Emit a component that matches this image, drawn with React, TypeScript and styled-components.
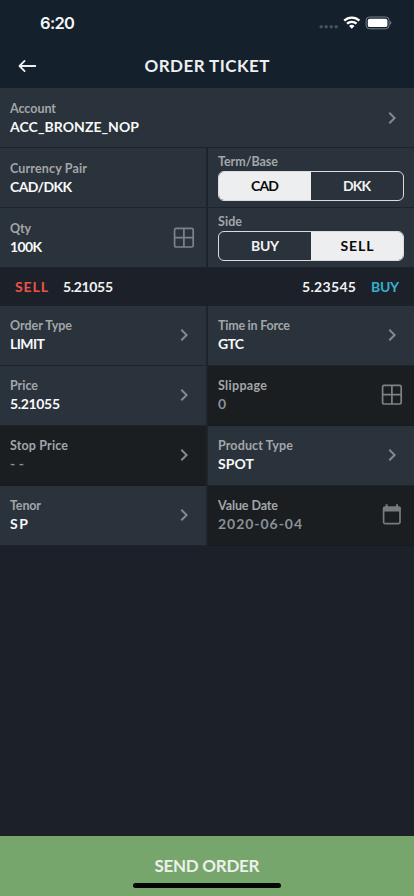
import React, { useLayoutEffect, useRef, useState } from "react";
import styled, { createGlobalStyle } from "styled-components";

const GlobalStyle = createGlobalStyle`
  * { box-sizing: border-box; }
  body { margin: 0; background: #1c2028; }
`;

const Screen = styled.div`
  width: 414px;
  height: 896px;
  display: flex;
  flex-direction: column;
  overflow: hidden;
  background: #1c2028;
  color: #f1f2f3;
  font-family: Lato, "Open Sans", sans-serif;
`;

const StatusBar = styled.div`
  height: 44px;
  flex: none;
  display: flex;
  align-items: center;
  justify-content: space-between;
  padding: 2px 22px 0 40px;
  background: #14202c;
`;

const Clock = styled.div`
  font: 600 16.5px/22px Inter, sans-serif;
  color: #f4f5f6;
`;

const StatusIcons = styled.div`
  display: flex;
  align-items: center;
  svg { display: block; }
`;

const Header = styled.header`
  height: 44px;
  flex: none;
  display: grid;
  grid-template-columns: 54px 1fr 54px;
  align-items: center;
  background: #14202c;
`;

const BackButton = styled.button`
  border: 0;
  background: none;
  padding: 0 0 1px 18px;
  height: 44px;
  svg { display: block; }
`;

const Title = styled.h1`
  margin: 0;
  display: flex;
  justify-content: center;
  font-size: 17px;
  line-height: 44px;
  font-weight: 700;
  color: #eeeff0;
`;

const Row = styled.div<{ $single?: boolean }>`
  display: grid;
  grid-template-columns: ${(p) => (p.$single ? "1fr" : "206px 206px")};
  column-gap: 2px;
  height: 60px;
  flex: none;
  background: #1e242b;
`;

const Cell = styled.div<{ $disabled?: boolean }>`
  display: flex;
  align-items: center;
  justify-content: space-between;
  padding: 0 10px;
  background: ${(p) => (p.$disabled ? "#1a1e21" : "#2a323b")};
  border-bottom: 1px solid ${(p) => (p.$disabled ? "#161a1e" : "#1e242b")};
`;

const Details = styled.section`
  flex: none;
  ${Cell} { padding-bottom: 2px; }
`;

const Labels = styled.div`
  display: flex;
  flex-direction: column;
`;

const Label = styled.div`
  font-size: 12.5px;
  line-height: 18px;
  font-weight: 700;
  color: #a3a6a9;
`;

const Value = styled.div<{ $muted?: boolean }>`
  font-size: 14px;
  line-height: 18px;
  font-weight: 700;
  color: ${(p) => (p.$muted ? "#8b9099" : "#f8f9f9")};
`;

const IconSlot = styled.div`
  width: 24px;
  svg { display: block; }
`;

const ToggleCell = styled(Cell)`
  flex-direction: column;
  align-items: flex-start;
  justify-content: flex-start;
  padding-top: 5px;
`;

const Toggle = styled.div`
  width: 186px;
  height: 30px;
  display: grid;
  grid-template-columns: 1fr 1fr;
  border: 1px solid #d9dbdd;
  border-radius: 6px;
  overflow: hidden;
`;

const Option = styled.button<{ $on: boolean }>`
  border: 0;
  padding: 0;
  display: flex;
  align-items: center;
  justify-content: center;
  font: 700 14px/18px Lato, sans-serif;
  background: ${(p) => (p.$on ? "#edeef0" : "transparent")};
  color: ${(p) => (p.$on ? "#08090a" : "#f1f2f3")};
`;

const RateBar = styled.div`
  height: 39px;
  margin-bottom: -1px;
  flex: none;
  display: flex;
  align-items: center;
  justify-content: space-between;
  padding: 0 15px 1px;
  background: #1c2028;
  font-size: 14px;
  line-height: 18px;
  font-weight: 700;
`;

const Quote = styled.div`
  display: flex;
  gap: 15px;
`;

const Side = styled.span<{ $color: string }>`
  color: ${(p) => p.$color};
`;

const Spacer = styled.div`
  flex: 1;
`;

const Send = styled.button`
  height: 60px;
  flex: none;
  border: 0;
  padding: 19px 0 5px;
  display: flex;
  flex-direction: column;
  align-items: center;
  justify-content: space-between;
  background: #77a66c;
  color: #edf0ec;
  font: 700 17px/22px Lato, sans-serif;
`;

const HomeIndicator = styled.div`
  width: 148px;
  height: 5px;
  flex: none;
  margin-bottom: 3px;
  border-radius: 3px;
  background: #050605;
`;

const Tracked = styled.span`
  display: inline-block;
  white-space: pre;
`;

/** Tracks the text out or in so that it spans the given width. */
function Fit({ w, children }: { w: number; children: string }) {
  const ref = useRef<HTMLSpanElement>(null);
  const [spacing, setSpacing] = useState(0);
  useLayoutEffect(() => {
    const natural = ref.current!.getBoundingClientRect().width;
    setSpacing((w - natural) / Math.max(1, children.length - 1));
  }, []);
  return (
    <Tracked ref={ref} style={{ letterSpacing: spacing, marginRight: -spacing }}>
      {children}
    </Tracked>
  );
}

type IconName = "chevron" | "grid" | "calendar";

function Icon({ name }: { name: IconName }) {
  if (name === "chevron")
    return (
      <svg width="24" height="24" viewBox="0 0 24 24" fill="#858a8f">
        <path d="M8.59 16.59 13.17 12 8.59 7.41 10 6l6 6-6 6z" />
      </svg>
    );
  if (name === "grid")
    return (
      <svg width="24" height="24" viewBox="0 0 24 24" fill="none" stroke="#7e8287" strokeWidth="1.7">
        <rect x="2.6" y="2.4" width="18.6" height="18.6" rx="1.5" />
        <path d="M11.9 2.5v18.5M2.6 11.7h18.6" />
      </svg>
    );
  return (
    <svg width="24" height="24" viewBox="0 0 24 24">
      <rect x="3.6" y="4.1" width="16.4" height="16.5" rx="1.3" fill="none" stroke="#777b7d" strokeWidth="1.7" />
      <path d="M3 4h17.6v4.4H3zM5.6 1.3h2v3h-2zM16 1.3h2v3h-2z" fill="#777b7d" />
    </svg>
  );
}

interface FieldProps {
  label: string;
  lw: number;
  value: string;
  vw: number;
  icon?: IconName;
  disabled?: boolean;
}

function Field({ label, lw, value, vw, icon, disabled }: FieldProps) {
  return (
    <Cell $disabled={disabled}>
      <Labels>
        <Label><Fit w={lw}>{label}</Fit></Label>
        <Value $muted={disabled}><Fit w={vw}>{value}</Fit></Value>
      </Labels>
      {icon && <IconSlot><Icon name={icon} /></IconSlot>}
    </Cell>
  );
}

interface ToggleProps {
  label: string;
  lw: number;
  options: [string, number][];
  selected: number;
}

function ToggleField({ label, lw, options, selected }: ToggleProps) {
  return (
    <ToggleCell>
      <Label><Fit w={lw}>{label}</Fit></Label>
      <Toggle>
        {options.map(([text, w], i) => (
          <Option key={text} $on={i === selected}><Fit w={w}>{text}</Fit></Option>
        ))}
      </Toggle>
    </ToggleCell>
  );
}

export default function App() {
  return (
    <Screen>
      <GlobalStyle />
      <StatusBar>
        <Clock><Fit w={35}>6:20</Fit></Clock>
        <StatusIcons>
          <svg width="74" height="16" viewBox="0 0 74 16">
            <g fill="#46515b">
              <circle cx="3.2" cy="11.8" r="1.8" />
              <circle cx="8.2" cy="11.8" r="1.8" />
              <circle cx="13.2" cy="11.8" r="1.8" />
              <circle cx="18.2" cy="11.8" r="1.8" />
            </g>
            <g fill="none" stroke="#fff" strokeWidth="2.3">
              <path d="M26.2 5.6a11 11 0 0 1 15.2 0" />
              <path d="M29 8.7a7 7 0 0 1 9.6 0" />
            </g>
            <path d="M31.1 11a4 4 0 0 1 5.4 0L33.8 13.8z" fill="#fff" />
            <rect x="48.1" y="2" width="23" height="11.8" rx="3.4" fill="none" stroke="#77808a" />
            <rect x="49.8" y="3.7" width="19.6" height="8.4" rx="1.9" fill="#fff" />
            <path d="M72.2 6c1.6.5 1.6 3.3 0 3.8z" fill="#77808a" />
          </svg>
        </StatusIcons>
      </StatusBar>
      <Header>
        <BackButton aria-label="Back">
          <svg width="20" height="16" viewBox="0 0 20 16" fill="none" stroke="#eceef0" strokeWidth="1.8" strokeLinecap="round" strokeLinejoin="round">
            <path d="M17.3 8H1.8M6.6 2.9 1.5 8l5.1 5.1" />
          </svg>
        </BackButton>
        <Title><Fit w={125}>ORDER TICKET</Fit></Title>
      </Header>
      <Row $single>
        <Field label="Account" lw={46} value="ACC_BRONZE_NOP" vw={129} icon="chevron" />
      </Row>
      <Row>
        <Field label="Currency Pair" lw={77} value="CAD/DKK" vw={62} />
        <ToggleField label="Term/Base" lw={60} options={[["CAD", 28], ["DKK", 28]]} selected={0} />
      </Row>
      <Row>
        <Field label="Qty" lw={21} value="100K" vw={32} icon="grid" />
        <ToggleField label="Side" lw={24} options={[["BUY", 28], ["SELL", 33]]} selected={1} />
      </Row>
      <RateBar>
        <Quote>
          <Side $color="#ee5247"><Fit w={33}>SELL</Fit></Side>
          <Fit w={50}>5.21055</Fit>
        </Quote>
        <Quote>
          <Fit w={54}>5.23545</Fit>
          <Side $color="#36aed0"><Fit w={28}>BUY</Fit></Side>
        </Quote>
      </RateBar>
      <Details>
        <Row>
          <Field label="Order Type" lw={62} value="LIMIT" vw={35} icon="chevron" />
          <Field label="Time in Force" lw={72} value="GTC" vw={26} icon="chevron" />
        </Row>
        <Row>
          <Field label="Price" lw={28} value="5.21055" vw={50} icon="chevron" />
          <Field label="Slippage" lw={49} value="0" vw={9} icon="grid" disabled />
        </Row>
        <Row>
          <Field label="Stop Price" lw={58} value="--" vw={14} icon="chevron" disabled />
          <Field label="Product Type" lw={75} value="SPOT" vw={36} icon="chevron" />
        </Row>
        <Row>
          <Field label="Tenor" lw={31} value="SP" vw={18} icon="chevron" />
          <Field label="Value Date" lw={60} value="2020-06-04" vw={84} icon="calendar" disabled />
        </Row>
      </Details>
      <Spacer />
      <Send>
        <Fit w={105}>SEND ORDER</Fit>
        <HomeIndicator />
      </Send>
    </Screen>
  );
}
